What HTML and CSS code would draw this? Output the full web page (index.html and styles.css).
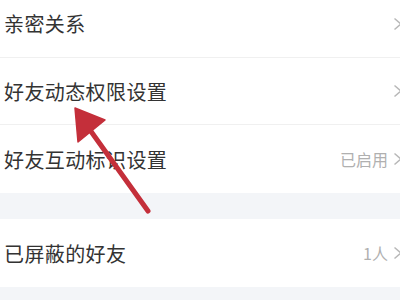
FILE: index.html
```html
<!DOCTYPE html>
<html>
<head>
    <meta charset="utf-8">
    <title>好友设置</title>
    <link rel="stylesheet" href="styles.css">
</head>
<body>
    <div class="page">
        <div class="group">
            <div class="row first">
                <span class="label">亲密关系</span>
                <span class="right"><svg class="chev" viewBox="0 0 10 14"><path d="M1.5 1.5 L8 7 L1.5 12.5"/></svg></span>
            </div>
            <div class="row">
                <span class="label">好友动态权限设置</span>
                <span class="right"><svg class="chev" viewBox="0 0 10 14"><path d="M1.5 1.5 L8 7 L1.5 12.5"/></svg></span>
            </div>
            <div class="row last">
                <span class="label">好友互动标识设置</span>
                <span class="right"><span class="value">已启用</span><svg class="chev" viewBox="0 0 10 14"><path d="M1.5 1.5 L8 7 L1.5 12.5"/></svg></span>
            </div>
        </div>
        <div class="gap"></div>
        <div class="group">
            <div class="row last">
                <span class="label">已屏蔽的好友</span>
                <span class="right"><span class="value">1人</span><svg class="chev" viewBox="0 0 10 14"><path d="M1.5 1.5 L8 7 L1.5 12.5"/></svg></span>
            </div>
        </div>
        <div class="gap"></div>

        <svg class="arrow" viewBox="0 0 400 300" width="400" height="300">
            <line x1="90" y1="130" x2="148" y2="211" stroke="#c42f3a" stroke-width="5" stroke-linecap="round"/>
            <polygon points="75,108 78,142 105,120" fill="#c42f3a" stroke="#c42f3a" stroke-width="1.5" stroke-linejoin="round"/>
        </svg>
    </div>
</body>
</html>
```

FILE: styles.css
```css
html, body {
    margin: 0;
    padding: 0;
    overflow: hidden;
}
body {
    background: #f3f5f8;
    font-family: "Noto Sans CJK SC", "Noto Sans", sans-serif;
}
.page {
    position: relative;
    width: 410px;
    margin-top: -10px;
}
.group {
    background: #fff;
}
.row {
    height: 67px;
    display: flex;
    align-items: center;
    justify-content: space-between;
    padding: 0 0 0 4px;
    border-bottom: 1px solid #f0f0f0;
    box-sizing: border-box;
}
.row.first {
    height: 68px;
}
.row.last {
    border-bottom: none;
    height: 68px;
}
.label {
    font-size: 20px;
    color: #333;
    letter-spacing: 0.4px;
}
.right {
    display: flex;
    align-items: center;
    gap: 5px;
}
.value {
    font-size: 16px;
    color: #b0b0b0;
}
.chev {
    width: 10px;
    height: 14px;
    margin-right: 7px;
}
.chev path {
    fill: none;
    stroke: #b8b8b8;
    stroke-width: 1.5;
}
.gap {
    height: 26px;
}
.arrow {
    position: absolute;
    left: 0;
    top: 10px;
}
```
